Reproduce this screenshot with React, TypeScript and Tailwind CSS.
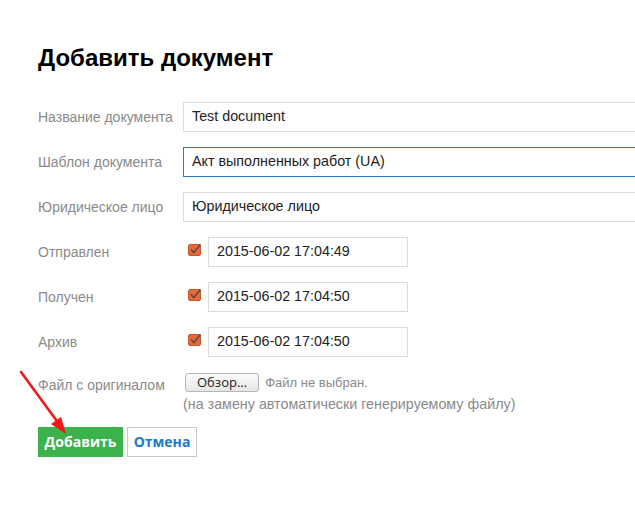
import React from "react";

function CheckIcon() {
  return (
    <svg width="14" height="13" viewBox="0 0 14 13" className="shrink-0">
      <rect x="0.5" y="1.5" width="12" height="11" rx="1.5" fill="#e46a3e" stroke="#c9552c" />
      <path d="M3 6.5 L5.8 9.5 L12.5 1.5" fill="none" stroke="#5b4b45" strokeWidth="1.6" />
    </svg>
  );
}

export default function App() {
  const dates = [
    { label: "Отправлен", value: "2015-06-02 17:04:49" },
    { label: "Получен", value: "2015-06-02 17:04:50" },
    { label: "Архив", value: "2015-06-02 17:04:50" },
  ];

  return (
    <div className="relative min-h-[519px] bg-white overflow-hidden font-['Liberation_Sans',Arial,sans-serif]">
      <div className="pl-[38px] pt-[44px]">
        <h1 className="text-[24px] leading-[28px] font-bold text-black mb-[30px]">Добавить документ</h1>

        <div className="flex flex-col gap-[15px]">
          <div className="flex items-center">
            <label className="w-[145px] shrink-0 text-[14px] text-[#8a8a8a]">Название документа</label>
            <div className="w-[470px] shrink-0 h-[30px] border border-[#dcdcdc] px-[8px] flex items-center text-[14.3px] text-[#222]">
              Test document
            </div>
          </div>
          <div className="flex items-center">
            <label className="w-[145px] shrink-0 text-[14px] text-[#8a8a8a]">Шаблон документа</label>
            <div className="w-[470px] shrink-0 h-[30px] border border-[#2a7fc4] px-[8px] flex items-center text-[14.3px] text-[#222]">
              Акт выполненных работ (UA)
            </div>
          </div>
          <div className="flex items-center">
            <label className="w-[145px] shrink-0 text-[14px] text-[#8a8a8a]">Юридическое лицо</label>
            <div className="w-[470px] shrink-0 h-[30px] border border-[#dcdcdc] px-[8px] flex items-center text-[14.3px] text-[#222]">
              Юридическое лицо
            </div>
          </div>

          {dates.map((d) => (
            <div key={d.label} className="flex items-center">
              <label className="w-[145px] shrink-0 text-[14px] text-[#8a8a8a]">{d.label}</label>
              <div className="w-[25px] shrink-0 pl-[5px] flex items-center -mt-[6px]">
                <CheckIcon />
              </div>
              <div className="w-[200px] shrink-0 h-[30px] border border-[#dcdcdc] px-[8px] flex items-center text-[14.3px] text-[#222]">
                {d.value}
              </div>
            </div>
          ))}
        </div>

        <div className="flex mt-[16px]">
          <label className="w-[145px] shrink-0 text-[14px] text-[#8a8a8a] pt-[2px]">Файл с оригиналом</label>
          <div className="flex flex-col">
            <div className="flex items-center gap-[6px] pl-[2px]">
              <button className="h-[19px] px-[11px] rounded-[3px] border border-[#b5b5b5] bg-gradient-to-b from-[#fbfbfb] to-[#e6e6e6] text-[13px] leading-none text-[#222] font-['Open_Sans',sans-serif]">
                Обзор...
              </button>
              <span className="text-[13px] text-[#8a8a8a]">Файл не выбран.</span>
            </div>
            <span className="text-[14.3px] text-[#8a8a8a] mt-[1px]">(на замену автоматически генерируемому файлу)</span>
          </div>
        </div>

        <div className="flex gap-[4px] mt-[12px]">
          <button className="h-[30px] w-[85px] bg-[#3bb24b] text-white text-[14px] font-bold font-['Open_Sans',sans-serif]">
            Добавить
          </button>
          <button className="h-[30px] w-[70px] bg-white border border-[#c8c8c8] text-[#1b78c6] text-[14px] font-bold font-['Open_Sans',sans-serif]">
            Отмена
          </button>
        </div>
      </div>

      <svg className="absolute left-0 top-0 pointer-events-none" width="100" height="460">
        <line x1="21" y1="372" x2="62" y2="428" stroke="#f21818" strokeWidth="2.6" strokeLinecap="round" />
        <polygon points="66,434 51,424 61,417" fill="#f21818" />
      </svg>
    </div>
  );
}
